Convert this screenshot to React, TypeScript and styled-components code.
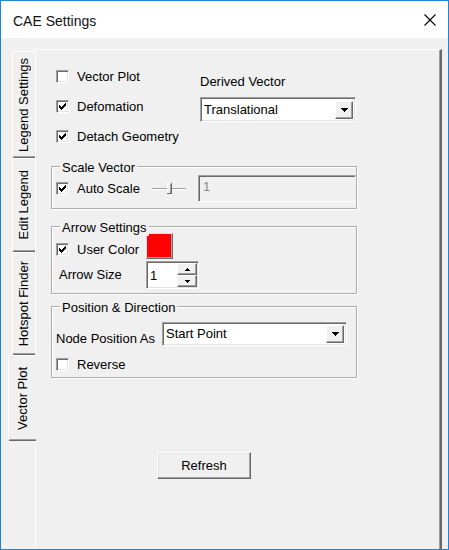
import React from "react";
import styled, { createGlobalStyle } from "styled-components";

const GlobalStyle = createGlobalStyle`
  *, *::before, *::after { box-sizing: border-box; }
  html, body { margin: 0; padding: 0; background: #f0f0f0; }
  body {
    font-family: "Liberation Sans", Arial, sans-serif;
    font-size: 13px;
    line-height: 16px;
    color: #000;
  }
`;

const Window = styled.div`
  width: 449px;
  height: 550px;
  border: 1px solid #1a84d8;
  background: #f0f0f0;
  display: flex;
  flex-direction: column;
  overflow: hidden;
`;

const TitleBar = styled.div`
  flex: none;
  height: 37px;
  background: #fff;
  display: flex;
  align-items: center;
  justify-content: space-between;
  padding: 0 12px 0 12px;
`;

const Title = styled.span`
  font-size: 14px;
  padding-top: 2px;
  color: #111;
`;

const CloseIcon = styled.svg`
  display: block;
  width: 12px;
  height: 12px;
`;

const Body = styled.div`
  flex: 1;
  min-height: 0;
  display: flex;
  padding: 11px 0 0 7px;
`;

const TabStrip = styled.div`
  flex: none;
  width: 27px;
  display: flex;
  flex-direction: column;
  align-items: flex-end;
  padding-top: 2px;
`;

const Tab = styled.div<{ $len: number; $active?: boolean }>`
  flex: none;
  position: relative;
  z-index: ${(p) => (p.$active ? 2 : 1)};
  width: ${(p) => (p.$active ? 28 : 23)}px;
  height: ${(p) => p.$len}px;
  margin-right: ${(p) => (p.$active ? -1 : 0)}px;
  background: #f0f0f0;
  border-top: 1px solid #fff;
  border-left: 1px solid #fff;
  border-bottom: 1px solid #696969;
  border-radius: 2px 0 0 2px;
  box-shadow: inset 0 -1px 0 #a0a0a0;
  display: flex;
  align-items: center;
  justify-content: center;
`;

const TabLabel = styled.span`
  writing-mode: vertical-rl;
  transform: rotate(180deg);
  white-space: nowrap;
`;

const Panel = styled.div`
  flex: 1;
  margin-right: 6px;
  border-top: 1px solid #fff;
  border-left: 1px solid #fff;
  border-right: 2px solid #696969;
  box-shadow: inset -1px 0 0 #a0a0a0;
  padding: 16px 0 0 15px;
  display: flex;
  flex-direction: column;
  align-items: flex-start;
`;

const TopSection = styled.div`
  display: grid;
  grid-template-columns: 144px 156px;
  padding-left: 5px;
`;

const CheckColumn = styled.div`
  display: flex;
  flex-direction: column;
  gap: 10px;
`;

const DerivedColumn = styled.div`
  display: flex;
  flex-direction: column;
  padding-top: 8px;
  gap: 7px;
`;

const CheckRow = styled.div<{ $w?: number }>`
  flex: none;
  display: flex;
  align-items: center;
  gap: 8px;
  height: 20px;
  white-space: nowrap;
  ${(p) => (p.$w ? `width: ${p.$w}px;` : "")}
`;

const CheckText = styled.span`
  padding-top: 1px;
`;

const Box = styled.span`
  flex: none;
  width: 13px;
  height: 13px;
  background: #fff;
  border: 1px solid;
  border-color: #a0a0a0 #fff #fff #a0a0a0;
  box-shadow: inset 1px 1px 0 #696969, inset -1px -1px 0 #e3e3e3;
  display: flex;
  align-items: center;
  justify-content: center;
`;

const Select = styled.div<{ $w: number; $h: number }>`
  flex: none;
  width: ${(p) => p.$w}px;
  height: ${(p) => p.$h}px;
  background: #fff;
  border: 1px solid;
  border-color: #a0a0a0 #fff #fff #a0a0a0;
  box-shadow: inset 1px 1px 0 #696969, inset -1px -1px 0 #e3e3e3;
  display: flex;
  align-items: center;
  padding: 1px 2px 1px 3px;
`;

const SelectText = styled.span`
  flex: 1;
  white-space: nowrap;
  overflow: hidden;
`;

const DropButton = styled.span`
  flex: none;
  width: 18px;
  height: 18px;
  background: #f0f0f0;
  border: 1px solid;
  border-color: #fff #696969 #696969 #fff;
  box-shadow: inset -1px -1px 0 #a0a0a0;
  display: flex;
  align-items: center;
  justify-content: center;
`;

const GroupBox = styled.div<{ $mt: number; $pad: string }>`
  position: relative;
  flex: none;
  width: 306px;
  margin-top: ${(p) => p.$mt}px;
  padding: ${(p) => p.$pad};
  border: 1px solid #adadad;
  box-shadow: inset 1px 1px 0 #fff, 1px 1px 0 #fff;
  display: flex;
  flex-direction: column;
`;

const GroupTitle = styled.span`
  position: absolute;
  top: -7px;
  left: 8px;
  padding: 0 2px;
  background: #f0f0f0;
  white-space: nowrap;
`;

const Row = styled.div<{ $align?: string; $mt?: number }>`
  display: flex;
  align-items: ${(p) => p.$align || "center"};
  margin-top: ${(p) => p.$mt || 0}px;
`;

const SliderIcon = styled.svg`
  flex: none;
  display: block;
  width: 34px;
  height: 12px;
  margin: 0 12px 0 10px;
`;

const TextBox = styled.div`
  flex: none;
  width: 158px;
  height: 27px;
  background: #f0f0f0;
  color: #8a8a8a;
  border: 1px solid;
  border-color: #a0a0a0 #f0f0f0 #fff #a0a0a0;
  box-shadow: inset 1px 1px 0 #696969;
  padding: 3px 0 0 4px;
`;

const FieldLabel = styled.span<{ $w: number; $ml?: number; $mb?: number }>`
  flex: none;
  width: ${(p) => p.$w}px;
  margin-left: ${(p) => p.$ml || 0}px;
  margin-bottom: ${(p) => p.$mb || 0}px;
  white-space: nowrap;
`;

const Swatch = styled.div<{ $color: string }>`
  flex: none;
  width: 27px;
  height: 26px;
  background: ${(p) => p.$color};
  border: 1px solid;
  border-color: #e3e3e3 #696969 #696969 #e3e3e3;
  box-shadow: inset -1px -1px 0 #a0a0a0;
`;

const Spin = styled.div`
  flex: none;
  width: 53px;
  height: 28px;
  background: #fff;
  border: 1px solid;
  border-color: #a0a0a0 #fff #fff #a0a0a0;
  box-shadow: inset 1px 1px 0 #696969, inset -1px -1px 0 #e3e3e3;
  padding: 1px;
  display: flex;
`;

const SpinValue = styled.span`
  flex: 1;
  padding: 5px 0 0 2px;
`;

const SpinButtons = styled.div`
  flex: none;
  width: 20px;
  display: flex;
  flex-direction: column;
`;

const SpinButton = styled.span`
  flex: 1;
  background: #f0f0f0;
  border: 1px solid;
  border-color: #fff #696969 #696969 #fff;
  box-shadow: inset -1px -1px 0 #a0a0a0;
  display: flex;
  align-items: center;
  justify-content: center;
`;

const Button = styled.button`
  flex: none;
  margin: 74px 0 0 106px;
  width: 94px;
  height: 27px;
  padding: 0;
  background: #f0f0f0;
  font: inherit;
  color: #000;
  border: 1px solid;
  border-color: #fff #696969 #696969 #fff;
  box-shadow: inset -1px -1px 0 #a0a0a0, inset 1px 1px 0 #e3e3e3;
`;

const Check = () => (
  <svg width="7" height="7" viewBox="0 0 7 7" shapeRendering="crispEdges">
    <path
      fill="#000"
      d="M6 0h1v1H6zM5 1h2v1H5zM0 2h1v1H0zM4 2h3v1H4zM0 3h2v1H0zM3 3h3v1H3zM0 4h5v1H0zM1 5h3v1H1zM2 6h1v1H2z"
    />
  </svg>
);

const DownArrow = () => (
  <svg width="7" height="4" viewBox="0 0 7 4" shapeRendering="crispEdges">
    <path fill="#000" d="M0 0h7v1H0zM1 1h5v1H1zM2 2h3v1H2zM3 3h1v1H3z" />
  </svg>
);

const SmallArrow = ({ up }: { up?: boolean }) => (
  <svg width="5" height="3" viewBox="0 0 5 3" shapeRendering="crispEdges">
    {up ? (
      <path fill="#000" d="M2 0h1v1H2zM1 1h3v1H1zM0 2h5v1H0z" />
    ) : (
      <path fill="#000" d="M0 0h5v1H0zM1 1h3v1H1zM2 2h1v1H2z" />
    )}
  </svg>
);

const CheckBox = ({
  label,
  checked,
  width,
}: {
  label: string;
  checked?: boolean;
  width?: number;
}) => (
  <CheckRow $w={width}>
    <Box>{checked && <Check />}</Box>
    <CheckText>{label}</CheckText>
  </CheckRow>
);

const Dropdown = ({ value, w, h }: { value: string; w: number; h: number }) => (
  <Select $w={w} $h={h}>
    <SelectText>{value}</SelectText>
    <DropButton>
      <DownArrow />
    </DropButton>
  </Select>
);

const tabs = [
  { label: "Legend Settings", len: 107 },
  { label: "Edit Legend", len: 94 },
  { label: "Hotspot Finder", len: 103 },
  { label: "Vector Plot", len: 86, active: true },
];

export default function App() {
  return (
    <>
      <GlobalStyle />
      <Window>
        <TitleBar>
          <Title>CAE Settings</Title>
          <CloseIcon viewBox="0 0 12 12">
            <path d="M0.5 0.5L11.5 11.5M11.5 0.5L0.5 11.5" stroke="#000" strokeWidth="1.1" />
          </CloseIcon>
        </TitleBar>
        <Body>
          <TabStrip>
            {tabs.map((t) => (
              <Tab key={t.label} $len={t.len} $active={t.active}>
                <TabLabel>{t.label}</TabLabel>
              </Tab>
            ))}
          </TabStrip>
          <Panel>
            <TopSection>
              <CheckColumn>
                <CheckBox label="Vector Plot" />
                <CheckBox label="Defomation" checked />
                <CheckBox label="Detach Geometry" checked />
              </CheckColumn>
              <DerivedColumn>
                <span>Derived Vector</span>
                <Dropdown value="Translational" w={156} h={25} />
              </DerivedColumn>
            </TopSection>

            <GroupBox $mt={20} $pad="8px 0 6px 4px">
              <GroupTitle>Scale Vector</GroupTitle>
              <Row>
                <CheckBox label="Auto Scale" checked width={86} />
                <SliderIcon viewBox="0 0 34 12" shapeRendering="crispEdges">
                  <rect x="0" y="5" width="34" height="1" fill="#a0a0a0" />
                  <rect x="0" y="6" width="34" height="1" fill="#fff" />
                  <rect x="15" y="0" width="5" height="11" fill="#f0f0f0" />
                  <rect x="15" y="0" width="1" height="11" fill="#fff" />
                  <rect x="19" y="0" width="1" height="11" fill="#696969" />
                  <rect x="15" y="10" width="5" height="1" fill="#696969" />
                  <rect x="18" y="1" width="1" height="9" fill="#a0a0a0" />
                </SliderIcon>
                <TextBox>1</TextBox>
              </Row>
            </GroupBox>

            <GroupBox $mt={17} $pad="6px 0 4px 4px">
              <GroupTitle>Arrow Settings</GroupTitle>
              <Row $align="flex-end">
                <CheckBox label="User Color" checked width={90} />
                <Swatch $color="#ff0000" />
              </Row>
              <Row $mt={2}>
                <FieldLabel $w={87} $ml={3}>
                  Arrow Size
                </FieldLabel>
                <Spin>
                  <SpinValue>1</SpinValue>
                  <SpinButtons>
                    <SpinButton>
                      <SmallArrow up />
                    </SpinButton>
                    <SpinButton>
                      <SmallArrow />
                    </SpinButton>
                  </SpinButtons>
                </Spin>
              </Row>
            </GroupBox>

            <GroupBox $mt={12} $pad="15px 0 3px 4px">
              <GroupTitle>Position &amp; Direction</GroupTitle>
              <Row $align="flex-end">
                <FieldLabel $w={106} $mb={-1}>
                  Node Position As
                </FieldLabel>
                <Dropdown value="Start Point" w={185} h={24} />
              </Row>
              <Row $mt={8}>
                <CheckBox label="Reverse" />
              </Row>
            </GroupBox>

            <Button>Refresh</Button>
          </Panel>
        </Body>
      </Window>
    </>
  );
}
